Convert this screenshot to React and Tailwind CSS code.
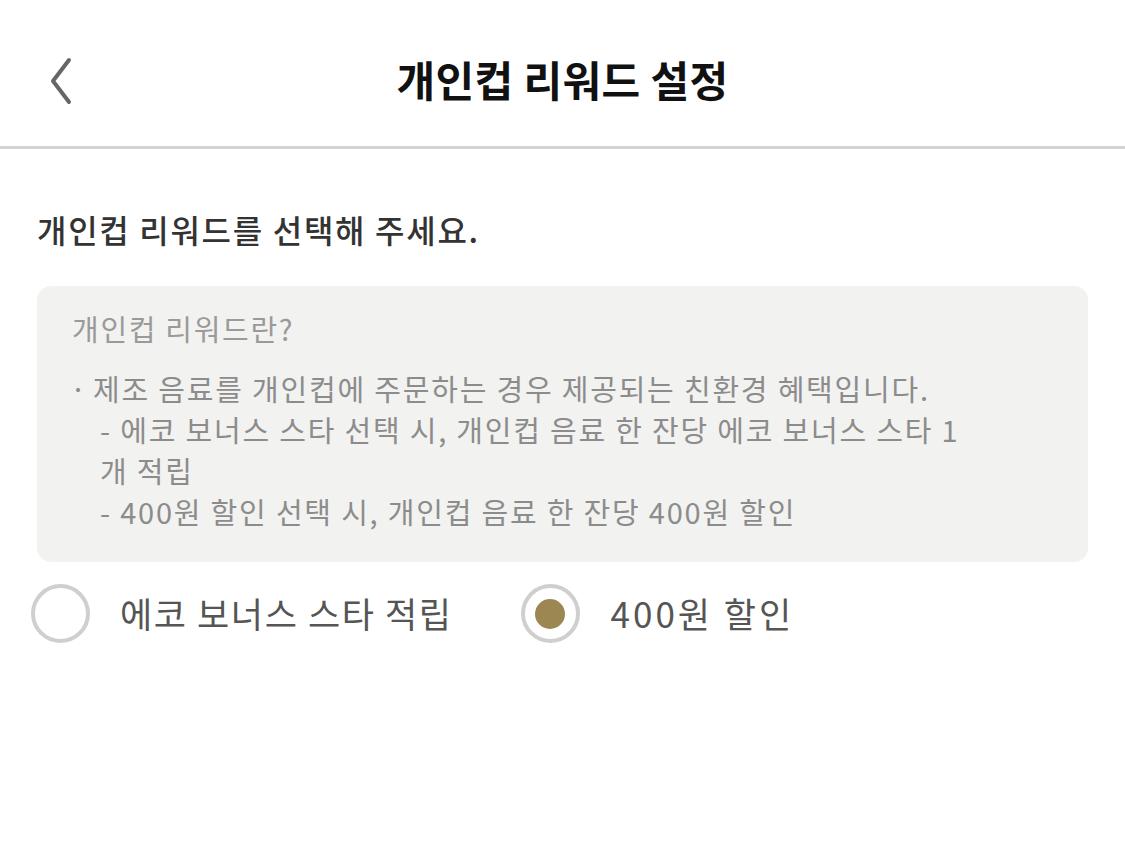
export default function App() {
  const font = { fontFamily: '"Noto Sans CJK KR", "Noto Sans", sans-serif' };
  return (
    <div className="w-[1125px] h-[841px] bg-white flex flex-col" style={font}>
      <header className="relative h-[149px] flex items-center justify-center border-b-[3px] border-[#d3d3d3]">
        <button className="absolute left-[42px] top-[54px] w-[38px] h-[54px] flex items-center justify-center">
          <svg width="32" height="50" viewBox="0 0 32 50" fill="none">
            <path d="M24 4 L8 25 L24 46" stroke="#666" strokeWidth="4" strokeLinecap="round" strokeLinejoin="round" />
          </svg>
        </button>
        <h1 className="text-[42px] font-bold text-[#111] tracking-[0.4px] leading-none mt-[12px]">개인컵 리워드 설정</h1>
      </header>

      <main className="px-[37px] flex flex-col">
        <p className="mt-[56px] text-[32px] leading-[48px] font-medium text-[#333] tracking-[1.7px]">
          개인컵 리워드를 선택해 주세요.
        </p>

        <div className="mt-[33px] w-[1051px] rounded-[14px] bg-[#f2f2f0] pl-[35px] pt-[22px] pb-[30px]">
          <p className="text-[29px] leading-[40px] text-[#9a9a9a] tracking-[1.7px]">개인컵 리워드란?</p>
          <div className="mt-[20px] text-[29px] leading-[41px] text-[#8c8c8c] tracking-[1.8px] whitespace-nowrap">
            <div className="flex">
              <span className="w-[23px] shrink-0 -ml-[2px]">·</span>
              <span>제조 음료를 개인컵에 주문하는 경우 제공되는 친환경 혜택입니다.</span>
            </div>
            <div className="pl-[28px]">- 에코 보너스 스타 선택 시, 개인컵 음료 한 잔당 에코 보너스 스타 1</div>
            <div className="pl-[28px]">개 적립</div>
            <div className="pl-[28px]">- 400원 할인 선택 시, 개인컵 음료 한 잔당 400원 할인</div>
          </div>
        </div>

        <div className="mt-[22px] flex items-center -ml-[6px]">
          <label className="flex items-center">
            <span className="w-[59px] h-[59px] rounded-full border-[4px] border-[#cfcfcf] bg-white" />
            <span className="ml-[30px] text-[35px] text-[#555] tracking-[1.6px]">에코 보너스 스타 적립</span>
          </label>
          <label className="flex items-center ml-[68px]">
            <span className="w-[59px] h-[59px] rounded-full border-[4px] border-[#cfcfcf] bg-white flex items-center justify-center">
              <span className="w-[30px] h-[30px] rounded-full bg-[#9c8753]" />
            </span>
            <span className="ml-[31px] text-[35px] text-[#555] tracking-[3px]">400원 할인</span>
          </label>
        </div>
      </main>
    </div>
  );
}
